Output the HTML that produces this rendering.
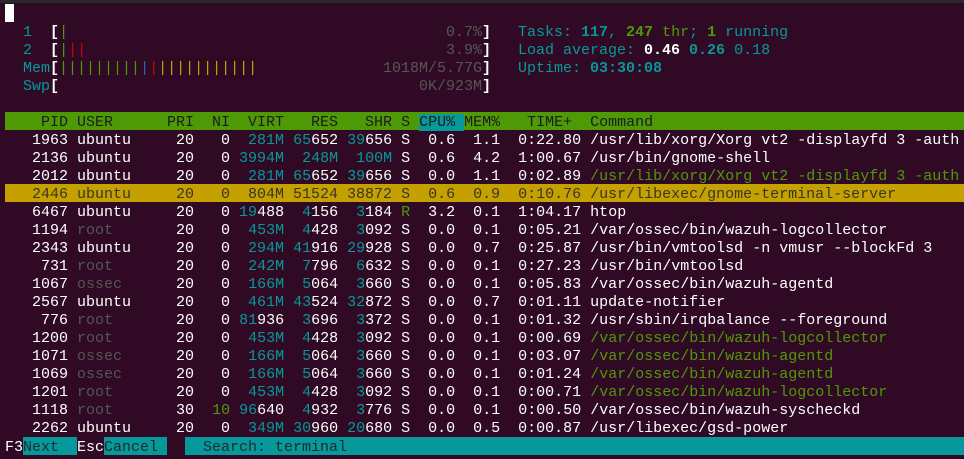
<!DOCTYPE html>
<html><head><meta charset="utf-8"><style>
*{margin:0;padding:0;box-sizing:border-box}
body{width:964px;height:455px;background:#300a24;overflow:hidden;position:relative;font-family:"Liberation Mono","DejaVu Sans Mono",monospace;font-size:15px;color:#fff}
.top{position:absolute;left:0;top:0;width:964px;height:3px;background:#2a2a2a}
.r{position:absolute;left:5px;width:959px;height:18px;line-height:22px;white-space:pre}
.c{color:#06989a}.g{color:#4e9a06}.k{color:#555753}.rd{color:#cc0000}.b{color:#3465a4}.y{color:#c4a000}
.B{font-weight:bold}.W{color:#fff;font-weight:bold}
.hd{background:#4e9a06;color:#1c1c1c}
.hd .cp{background:#06989a}
.sel{background:#c4a000;color:#3a3520}
.val{position:absolute;left:5px;width:486px;text-align:right;white-space:pre;height:18px;line-height:22px;color:#555753}
.rt{position:absolute;left:518px;white-space:pre;height:18px;line-height:22px}
.cur{position:absolute;left:5px;top:4px;width:9px;height:18px;background:#fff}
.bot{position:absolute;top:437px;height:18px;line-height:22px;white-space:pre}
</style></head><body>
<div class="top"></div>
<div class="cur"></div>

<div class="r" style="top:22px">  <span class="c">1</span>  <span class="W">[</span><span class="g">|</span></div>
<div class="val" style="top:22px">0.7%<span class="W">]</span></div>
<div class="r" style="top:40px">  <span class="c">2</span>  <span class="W">[</span><span class="g">|</span><span class="rd">||</span></div>
<div class="val" style="top:40px">3.9%<span class="W">]</span></div>
<div class="r" style="top:58px">  <span class="c">Mem</span><span class="W">[</span><span class="g">|||||||||</span><span class="b">|</span><span class="rd">|</span><span class="y">|||||||||||</span></div>
<div class="val" style="top:58px">1018M/5.77G<span class="W">]</span></div>
<div class="r" style="top:76px">  <span class="c">Swp</span><span class="W">[</span></div>
<div class="val" style="top:76px">0K/923M<span class="W">]</span></div>

<div class="rt" style="top:22px"><span class="c">Tasks: </span><span class="c B">117</span><span class="c">, </span><span class="g B">247</span><span class="g"> thr</span><span class="c">; </span><span class="g B">1</span><span class="c"> running</span></div>
<div class="rt" style="top:40px"><span class="c">Load average: </span><span class="W">0.46 </span><span class="c B">0.26 </span><span class="c">0.18</span></div>
<div class="rt" style="top:58px"><span class="c">Uptime: </span><span class="c B">03:30:08</span></div>

<div class="r hd" style="top:112px">    PID USER      PRI  NI  VIRT   RES   SHR S <span class="cp">CPU% </span>MEM%   TIME+  Command</div>

<div class="r" style="top:130px">   1963 ubuntu     20   0  <span class="c">281M</span> <span class="c">65</span>652 <span class="c">39</span>656 S  0.6  1.1  0:22.80 /usr/lib/xorg/Xorg vt2 -displayfd 3 -auth</div>
<div class="r" style="top:148px">   2136 ubuntu     20   0 <span class="c">3994M</span>  <span class="c">248M</span>  <span class="c">100M</span> S  0.6  4.2  1:00.67 /usr/bin/gnome-shell</div>
<div class="r" style="top:166px">   2012 ubuntu     20   0  <span class="c">281M</span> <span class="c">65</span>652 <span class="c">39</span>656 S  0.0  1.1  0:02.89 <span class="g">/usr/lib/xorg/Xorg vt2 -displayfd 3 -auth</span></div>
<div class="r sel" style="top:184px">   2446 ubuntu     20   0  804M 51524 38872 S  0.6  0.9  0:10.76 /usr/libexec/gnome-terminal-server</div>
<div class="r" style="top:202px">   6467 ubuntu     20   0 <span class="c">19</span>488  <span class="c">4</span>156  <span class="c">3</span>184 <span class="g">R</span>  3.2  0.1  1:04.17 htop</div>
<div class="r" style="top:220px">   1194 <span class="k">root</span>       20   0  <span class="c">453M</span>  <span class="c">4</span>428  <span class="c">3</span>092 S  0.0  0.1  0:05.21 /var/ossec/bin/wazuh-logcollector</div>
<div class="r" style="top:238px">   2343 ubuntu     20   0  <span class="c">294M</span> <span class="c">41</span>916 <span class="c">29</span>928 S  0.0  0.7  0:25.87 /usr/bin/vmtoolsd -n vmusr --blockFd 3</div>
<div class="r" style="top:256px">    731 <span class="k">root</span>       20   0  <span class="c">242M</span>  <span class="c">7</span>796  <span class="c">6</span>632 S  0.0  0.1  0:27.23 /usr/bin/vmtoolsd</div>
<div class="r" style="top:274px">   1067 <span class="k">ossec</span>      20   0  <span class="c">166M</span>  <span class="c">5</span>064  <span class="c">3</span>660 S  0.0  0.1  0:05.83 /var/ossec/bin/wazuh-agentd</div>
<div class="r" style="top:292px">   2567 ubuntu     20   0  <span class="c">461M</span> <span class="c">43</span>524 <span class="c">32</span>872 S  0.0  0.7  0:01.11 update-notifier</div>
<div class="r" style="top:310px">    776 <span class="k">root</span>       20   0 <span class="c">81</span>936  <span class="c">3</span>696  <span class="c">3</span>372 S  0.0  0.1  0:01.32 /usr/sbin/irqbalance --foreground</div>
<div class="r" style="top:328px">   1200 <span class="k">root</span>       20   0  <span class="c">453M</span>  <span class="c">4</span>428  <span class="c">3</span>092 S  0.0  0.1  0:00.69 <span class="g">/var/ossec/bin/wazuh-logcollector</span></div>
<div class="r" style="top:346px">   1071 <span class="k">ossec</span>      20   0  <span class="c">166M</span>  <span class="c">5</span>064  <span class="c">3</span>660 S  0.0  0.1  0:03.07 <span class="g">/var/ossec/bin/wazuh-agentd</span></div>
<div class="r" style="top:364px">   1069 <span class="k">ossec</span>      20   0  <span class="c">166M</span>  <span class="c">5</span>064  <span class="c">3</span>660 S  0.0  0.1  0:01.24 <span class="g">/var/ossec/bin/wazuh-agentd</span></div>
<div class="r" style="top:382px">   1201 <span class="k">root</span>       20   0  <span class="c">453M</span>  <span class="c">4</span>428  <span class="c">3</span>092 S  0.0  0.1  0:00.71 <span class="g">/var/ossec/bin/wazuh-logcollector</span></div>
<div class="r" style="top:400px">   1118 <span class="k">root</span>       30  <span class="g">10</span> <span class="c">96</span>640  <span class="c">4</span>932  <span class="c">3</span>776 S  0.0  0.1  0:00.50 /var/ossec/bin/wazuh-syscheckd</div>
<div class="r" style="top:418px">   2262 ubuntu     20   0  <span class="c">349M</span> <span class="c">30</span>960 <span class="c">20</span>680 S  0.0  0.5  0:00.87 /usr/libexec/gsd-power</div>

<div class="bot" style="left:5px">F3</div>
<div class="bot" style="left:23px;width:54px;background:#06989a;color:#1c2c2c">Next</div>
<div class="bot" style="left:77px">Esc</div>
<div class="bot" style="left:104px;width:63px;background:#06989a;color:#1c2c2c">Cancel</div>
<div class="bot" style="left:185px;width:779px;background:#06989a;color:#1c2c2c">  Search: terminal</div>
</body></html>
